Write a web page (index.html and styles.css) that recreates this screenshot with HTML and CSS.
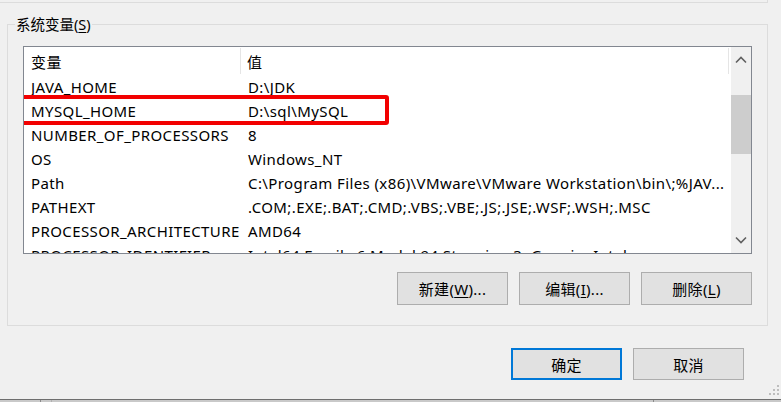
FILE: index.html
```html
<!DOCTYPE html>
<html lang="zh-CN">
<head>
<meta charset="utf-8">
<title>系统变量</title>
<link rel="stylesheet" href="styles.css">
</head>
<body>
<div class="dialog">
  <div class="top-group"></div>
  <div class="group">
    <div class="legend">系统变量(<u>S</u>)</div>
    <div class="list">
      <div class="list-main">
        <div class="header">
          <div class="hcell c1">变量</div>
          <div class="hcell c2">值</div>
        </div>
        <div class="rows">
          <div class="row"><div class="cell c1">JAVA_HOME</div><div class="cell c2">D:\JDK</div></div>
          <div class="row"><div class="cell c1">MYSQL_HOME</div><div class="cell c2">D:\sql\MySQL</div></div>
          <div class="row"><div class="cell c1">NUMBER_OF_PROCESSORS</div><div class="cell c2">8</div></div>
          <div class="row"><div class="cell c1">OS</div><div class="cell c2">Windows_NT</div></div>
          <div class="row"><div class="cell c1">Path</div><div class="cell c2">C:\Program Files (x86)\VMware\VMware Workstation\bin\;%JAV...</div></div>
          <div class="row"><div class="cell c1">PATHEXT</div><div class="cell c2">.COM;.EXE;.BAT;.CMD;.VBS;.VBE;.JS;.JSE;.WSF;.WSH;.MSC</div></div>
          <div class="row"><div class="cell c1">PROCESSOR_ARCHITECTURE</div><div class="cell c2">AMD64</div></div>
          <div class="row"><div class="cell c1">PROCESSOR_IDENTIFIER</div><div class="cell c2">Intel64 Family 6 Model 94 Stepping 3, GenuineIntel</div></div>
        </div>
        <div class="highlight"></div>
      </div>
      <div class="scrollbar">
        <div class="arrow">
          <svg width="12" height="8" viewBox="0 0 12 8"><path d="M1 6.5 L6 1.5 L11 6.5" fill="none" stroke="#606060" stroke-width="1.6"/></svg>
        </div>
        <div class="track"><div class="thumb"></div></div>
        <div class="arrow">
          <svg width="12" height="8" viewBox="0 0 12 8"><path d="M1 1.5 L6 6.5 L11 1.5" fill="none" stroke="#606060" stroke-width="1.6"/></svg>
        </div>
      </div>
    </div>
    <div class="btn-row">
      <button class="btn">新建(<u>W</u>)...</button>
      <button class="btn">编辑(<u>I</u>)...</button>
      <button class="btn">删除(<u>L</u>)</button>
    </div>
  </div>
  <div class="dlg-row">
    <button class="btn btn-default">确定</button>
    <button class="btn">取消</button>
  </div>
  <svg class="grip" width="12" height="12" viewBox="0 0 12 12">
    <rect x="8" y="0" width="2" height="2" fill="#bdbdbd"/>
    <rect x="4" y="4" width="2" height="2" fill="#bdbdbd"/>
    <rect x="8" y="4" width="2" height="2" fill="#bdbdbd"/>
    <rect x="0" y="8" width="2" height="2" fill="#bdbdbd"/>
    <rect x="4" y="8" width="2" height="2" fill="#bdbdbd"/>
    <rect x="8" y="8" width="2" height="2" fill="#bdbdbd"/>
  </svg>
</div>
<div class="bottom-line"></div>
<div class="taskbar">
  <div class="tb-seg s1"></div>
  <div class="tb-seg s2"></div>
  <div class="tb-seg s3"></div>
</div>
</body>
</html>
```

FILE: styles.css
```css
* { box-sizing: border-box; }
html, body {
  margin: 0;
  padding: 0;
  background: #f0f0f0;
  width: 781px;
  height: 402px;
  overflow: hidden;
}
body {
  font-family: "Noto Sans", "Noto Sans CJK SC", sans-serif;
  font-size: 15px;
  letter-spacing: 0.4px;
  color: #000;
}
.dialog {
  position: relative;
  height: 399px;
}
.top-group {
  width: 768px;
  height: 3px;
  border-right: 1px solid #dcdcdc;
  border-bottom: 1px solid #dcdcdc;
}
.group {
  margin-top: 21px;
  margin-left: 7px;
  width: 761px;
  height: 302px;
  border: 1px solid #dcdcdc;
  padding: 0 15px 0 15px;
}
.legend {
  display: block;
  width: max-content;
  margin-top: -11px;
  margin-left: -8px;
  padding: 0 1px;
  background: #f0f0f0;
  height: 21px;
  line-height: 21px;
  font-size: 14.5px;
  letter-spacing: 0;
}
.legend u, .btn u { text-underline-offset: 2px; }
.list {
  margin-top: 11px;
  height: 208px;
  border: 1px solid #828790;
  background: #fff;
  display: flex;
}
.list-main {
  position: relative;
  flex: 1;
  overflow: hidden;
}
.header {
  display: flex;
  height: 28px;
  padding-top: 1px;
}
.hcell {
  line-height: 28px;
  height: 26px;
}
.hcell.c1 {
  width: 217px;
  padding-left: 7px;
  border-right: 1px solid #e5e5e5;
}
.hcell.c2 {
  width: 488px;
  padding-left: 6px;
  border-right: 1px solid #e5e5e5;
}
.row {
  display: flex;
  height: 24px;
  line-height: 24px;
}
.cell { white-space: nowrap; overflow: hidden; }
.cell.c1 { width: 217px; padding-left: 7px; }
.cell.c2 { width: 488px; padding-left: 7px; }
.highlight {
  position: absolute;
  left: -5px;
  top: 48px;
  width: 370px;
  height: 30px;
  border: 4px solid #f20000;
  border-radius: 3px;
}
.scrollbar {
  width: 20px;
  background: #f0f0f0;
  display: flex;
  flex-direction: column;
}
.arrow {
  height: 26px;
  display: flex;
  align-items: center;
  justify-content: center;
}
.track {
  flex: 1;
  padding-top: 22px;
}
.thumb {
  height: 59px;
  background: #cdcdcd;
}
.btn-row {
  display: flex;
  justify-content: flex-end;
  gap: 11px;
  margin-top: 18px;
}
.btn {
  width: 111px;
  height: 33px;
  background: #e1e1e1;
  border: 1px solid #adadad;
  font-family: "Noto Sans", "Noto Sans CJK SC", sans-serif;
  font-size: 15px;
  letter-spacing: 0.3px;
  color: #000;
  padding: 0;
  margin: 0;
}
.dlg-row {
  display: flex;
  justify-content: flex-end;
  gap: 11px;
  margin-top: 22px;
  padding-right: 37px;
}
.dlg-row .btn { height: 32px; }
.btn-default {
  border: 2px solid #0078d7;
}
.grip {
  position: absolute;
  right: 0;
  bottom: 2px;
}
.bottom-line {
  height: 1px;
  background: #6e6e6e;
}
.taskbar {
  height: 2px;
  background: #c9c9c9;
  display: flex;
}
.tb-seg { height: 2px; }
.s1 { width: 41px; border-right: 1px solid #8a8a8a; }
.s2 { width: 11px; border-right: 1px solid #b0b0b0; }
.s3 { width: 602px; border-right: 1px solid #8a8a8a; }
```
